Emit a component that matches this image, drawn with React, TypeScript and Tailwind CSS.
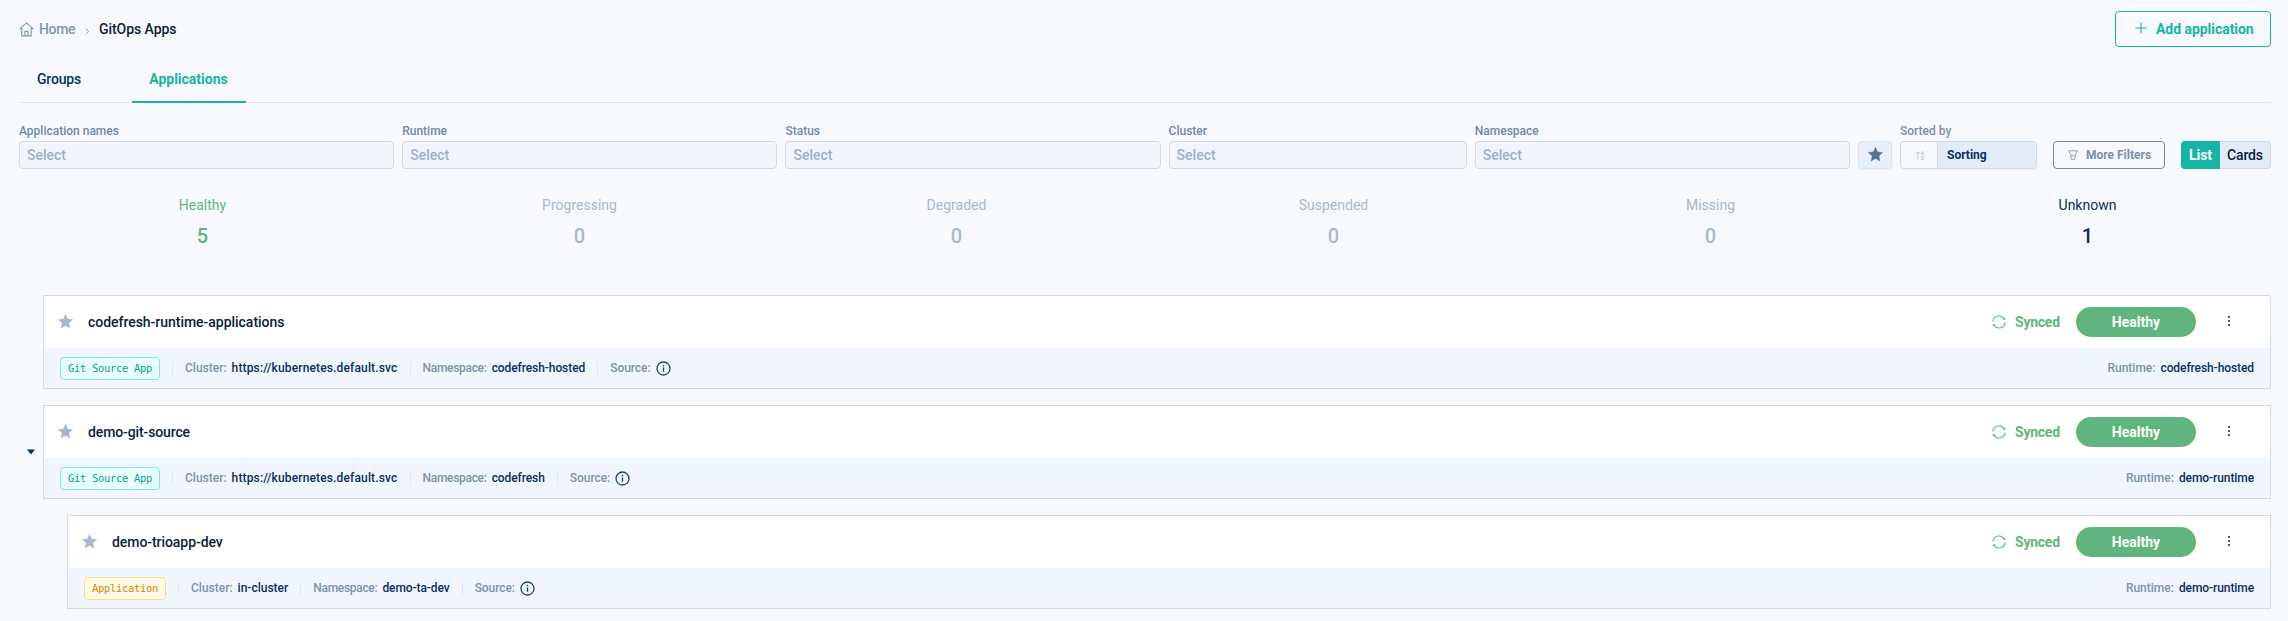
import type { ReactNode } from "react";

function HomeIcon() {
  return (
    <svg width="15" height="15" viewBox="0 0 15 15" fill="none" stroke="#7d95b0" strokeWidth="1.1" strokeLinejoin="round">
      <path d="M2.8 6.6H1L7.5.9 14 6.6h-1.8v7.3H2.8z" />
      <path d="M5.9 13.9V9.4h3.2v4.5" />
    </svg>
  );
}

function StarIcon({ className }: { className: string }) {
  return (
    <svg width="15" height="15" viewBox="0 0 15 15" className={className}>
      <path
        d="M7.5.3l2.1 4.6 5.1.6-3.8 3.4 1.1 5.2-4.5-2.6L3 14.1l1.1-5.2L.3 5.5l5.1-.6z"
        fill="currentColor"
        stroke="currentColor"
        strokeWidth=".4"
        strokeLinejoin="round"
      />
    </svg>
  );
}

function SortIcon() {
  return (
    <svg width="9" height="9" viewBox="0 0 9 9" fill="none" stroke="#aebbd0" strokeWidth=".8">
      <path d="M1.9 8.6V1M.4 2.4L1.9.7l1.5 1.7" />
      <path d="M5.2 3.6L6.7.5l1.5 3.1M5.7 2.7h2" />
      <path d="M5.4 5.4h2.5L5.4 8.4H8" />
    </svg>
  );
}

function FunnelIcon() {
  return (
    <svg width="10" height="10" viewBox="0 0 10 10" fill="none" stroke="#7d93ae" strokeWidth=".85" strokeLinejoin="round">
      <path d="M.5.8h9L7 5.5v3.7H3V5.5z" />
      <path d="M3 5.7h4" />
    </svg>
  );
}

function SyncIcon() {
  return (
    <svg width="14" height="14" viewBox="0 0 14 14" fill="none" stroke="#5fb57d" strokeWidth="1.1" strokeLinecap="round">
      <path d="M.9 6.1A6.1 6.1 0 0 1 12.3 4.2" />
      <path d="M13.1 7.9A6.1 6.1 0 0 1 1.7 9.8" />
      <path d="M13.2 2.3v2.5h-2.5zM.8 11.7V9.2h2.5z" fill="#5fb57d" stroke="none" />
    </svg>
  );
}

function InfoIcon() {
  return (
    <svg width="15" height="15" viewBox="0 0 15 15" fill="none" stroke="#1d4471" className="ml-[5px]">
      <circle cx="7.5" cy="7.5" r="6.5" strokeWidth="1.3" />
      <path d="M7.5 6.4v4.4" strokeWidth="1.3" />
      <path d="M7.5 3.9v1.4" strokeWidth="1.4" />
    </svg>
  );
}

function Field({ label, className }: { label: string; className: string }) {
  return (
    <div className={`min-w-0 basis-0 ${className}`}>
      <div className="h-[18px] text-xs leading-[16px] font-medium text-[#7089a6]">{label}</div>
      <div className="flex h-7 items-center rounded border border-[#cfd9e8] bg-[#f0f5fe] px-[7px] font-medium text-[#9db0c9]">
        Select
      </div>
    </div>
  );
}

const stats = [
  { label: "Healthy", value: 5, color: "text-[#5fb57d]" },
  { label: "Progressing", value: 0, color: "text-[#a9b8cf]" },
  { label: "Degraded", value: 0, color: "text-[#a9b8cf]" },
  { label: "Suspended", value: 0, color: "text-[#a9b8cf]" },
  { label: "Missing", value: 0, color: "text-[#a9b8cf]" },
  { label: "Unknown", value: 1, color: "text-[#0b2f5e]" },
];

function Separator() {
  return <span className="mx-3 h-[13px] w-px bg-[#dfe8f4]" />;
}

function Detail({ label, value, labelClass = "", valueClass = "" }: { label: string; value?: string; labelClass?: string; valueClass?: string }) {
  return (
    <span className="flex items-center text-xs font-medium">
      <span className={`text-[#7d93ad] ${labelClass}`}>{label}:</span>
      {value && <span className={`ml-[5px] text-[#0b2f5e] ${valueClass}`}>{value}</span>}
    </span>
  );
}

type CardProps = {
  name: string;
  nameClass: string;
  badge: ReactNode;
  cluster: string;
  clusterClass?: string;
  namespace: string;
  runtime: string;
  className?: string;
};

function AppCard({ name, nameClass, badge, cluster, clusterClass, namespace, runtime, className = "" }: CardProps) {
  return (
    <div className={`h-[94px] border border-[#cfd9e8] bg-white ${className}`}>
      <div className="flex h-[52px] items-center pl-[14px]">
        <StarIcon className="-translate-y-px text-[#a9b7cd]" />
        <span className={`ml-[15px] font-medium text-[#0d2138] ${nameClass}`}>{name}</span>
        <div className="ml-auto flex items-center">
          <SyncIcon />
          <span className="ml-[9px] w-[45px] font-bold tracking-[-0.24px] text-[#5fb57d]">Synced</span>
          <span className="ml-4 flex h-[30px] w-[120px] items-center justify-center rounded-full bg-[#5fb57d] font-bold text-white">
            Healthy
          </span>
          <svg width="4" height="12" viewBox="0 0 4 12" fill="#4b5d75" className="mr-[39px] ml-[31px] -translate-y-px">
            <path d="M1 1h2v2H1zM1 5h2v2H1zM1 9h2v2H1z" />
          </svg>
        </div>
      </div>
      <div className="flex h-10 items-center bg-[#f0f5fe] px-4">
        {badge}
        <Separator />
        <Detail label="Cluster" value={cluster} valueClass={clusterClass} />
        <Separator />
        <Detail label="Namespace" value={namespace} labelClass="tracking-[-0.3px]" valueClass="tracking-[-0.08px]" />
        <Separator />
        <Detail label="Source" labelClass="tracking-[-0.06px]" />
        <InfoIcon />
        <div className="ml-auto">
          <Detail label="Runtime" value={runtime} valueClass="tracking-[-0.08px]" />
        </div>
      </div>
    </div>
  );
}

const badgeBase =
  "flex h-[23px] items-center justify-center rounded border font-['DejaVu_Sans_Mono',monospace] text-[10.5px] tracking-[-0.32px] whitespace-pre";

function GitSourceBadge() {
  return <span className={`w-[100px] border-[#86e8db] bg-[#e6fffa] text-[#159a96] ${badgeBase}`}>Git Source App</span>;
}

export default function App() {
  return (
    <div className="h-[621px] overflow-hidden bg-[#f8f9fe] pt-[11px] pr-[17px] pl-[19px] font-[Roboto,sans-serif] text-sm whitespace-nowrap">
      <header className="flex h-9 items-center justify-between">
        <nav className="flex items-center font-medium">
          <HomeIcon />
          <span className="ml-[5px] w-[36px] tracking-[-0.35px] text-[#7d95b0]">Home</span>
          <svg width="5" height="7" viewBox="0 0 5 7" fill="none" stroke="#8fa3bd" className="mt-[4px] ml-[10px]">
            <path d="M.7.7l3 2.8-3 2.8" />
          </svg>
          <span className="ml-[9px] tracking-[-0.06px] text-[#0d2138]">GitOps Apps</span>
        </nav>
        <button className="flex h-9 w-[156px] items-center rounded border border-[#14b5a4] pl-[19px] font-bold text-[#14b5a4] shadow-xs">
          <svg width="12" height="12" viewBox="0 0 12 12" stroke="#14b5a4" strokeWidth="1.1" className="-translate-y-px">
            <path d="M6 .5v11M.5 6h11" />
          </svg>
          <span className="ml-[9px] tracking-[-0.04px]">Add application</span>
        </button>
      </header>

      <div className="mt-[9px] flex h-[47px] items-stretch border-b border-[#dfe9f5]">
        <div className="flex w-[81px] items-center pl-[18px] font-medium tracking-[-0.2px] text-[#0b2f5e]">Groups</div>
        <div className="-mb-px ml-8 flex w-[114px] items-center justify-center border-b-2 border-[#14b5a4] pt-px pr-px font-bold text-[#14b5a4]">
          Applications
        </div>
      </div>

      <div className="mt-5 flex items-end">
        <div className="flex flex-1 gap-2">
          <Field label="Application names" className="grow-[375]" />
          <Field label="Runtime" className="grow-[375]" />
          <Field label="Status" className="grow-[375]" />
          <Field label="Cluster" className="grow-[298]" />
          <Field label="Namespace" className="grow-[375]" />
        </div>
        <button className="ml-2 flex h-7 w-[34px] items-center justify-center rounded border border-[#dae4f1] bg-[#e7effa] shadow-xs">
          <StarIcon className="-translate-y-px text-[#587597]" />
        </button>
        <div className="ml-2 w-[137px]">
          <div className="h-[18px] text-xs leading-[16px] font-medium text-[#7a90aa]">Sorted by</div>
          <div className="flex h-7 overflow-hidden rounded border border-[#cfd9e8] shadow-xs">
            <div className="flex w-[37px] items-center justify-center border-r border-[#cfd9e8] pl-[2px]">
              <SortIcon />
            </div>
            <div className="flex flex-1 items-center bg-[#e2ecf9] pl-[9px] text-xs font-bold text-[#0b2f5e]">Sorting</div>
          </div>
        </div>
        <button className="ml-4 flex h-7 w-[112px] items-center rounded border border-[#7089a6] pl-[14px] text-xs font-bold text-[#7a90aa]">
          <FunnelIcon />
          <span className="ml-2">More Filters</span>
        </button>
        <div className="ml-4 flex h-7 w-[90px]">
          <div className="flex w-[39px] items-center justify-center rounded-l bg-[#14b5a4] font-bold text-white">List</div>
          <div className="flex flex-1 items-center justify-center rounded-r border border-l-0 border-[#cfd9e8] bg-[#e2ecf9] font-medium tracking-[-0.15px] text-[#0d2138]">
            Cards
          </div>
        </div>
      </div>

      <div className="mt-[26px] -mr-[5px] -ml-[5px] grid grid-cols-6">
        {stats.map((s) => (
          <div key={s.label} className={`flex flex-col items-center ${s.color}`}>
            <span className="h-5 leading-5">{s.label}</span>
            <span className="mt-[7px] h-7 text-xl leading-7 font-medium">{s.value}</span>
          </div>
        ))}
      </div>

      <main className="mt-[45px] ml-6 flex flex-col gap-4">
        <AppCard
          name="codefresh-runtime-applications"
          nameClass="tracking-[-0.03px]"
          badge={<GitSourceBadge />}
          cluster="https://kubernetes.default.svc"
          clusterClass="tracking-[0.15px]"
          namespace="codefresh-hosted"
          runtime="codefresh-hosted"
          className="rounded-tr-[3px]"
        />
        <div className="relative">
          <svg width="8" height="6" viewBox="0 0 8 6" className="absolute top-[44px] -left-4">
            <path d="M0 .4h8L4 5.6z" fill="#0b2f5e" />
          </svg>
          <AppCard
            name="demo-git-source"
            nameClass="tracking-[-0.12px]"
            badge={<GitSourceBadge />}
            cluster="https://kubernetes.default.svc"
            clusterClass="tracking-[0.15px]"
            namespace="codefresh"
            runtime="demo-runtime"
          />
        </div>
        <AppCard
          name="demo-trioapp-dev"
          nameClass="tracking-[-0.06px]"
          badge={<span className={`w-[82px] border-[#fbe08a] bg-[#fffbe6] text-[#d48806] ${badgeBase}`}>Application</span>}
          cluster="in-cluster"
          namespace="demo-ta-dev"
          runtime="demo-runtime"
          className="ml-6"
        />
      </main>
    </div>
  );
}
